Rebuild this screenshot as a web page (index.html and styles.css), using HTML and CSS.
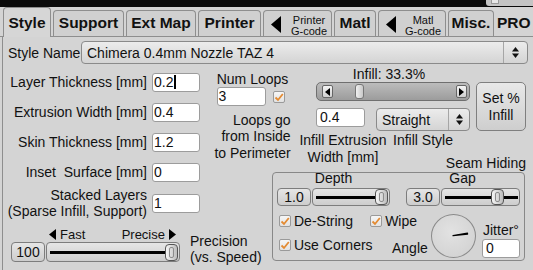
FILE: index.html
```html
<!DOCTYPE html>
<html lang="en">
<head>
  <meta charset="UTF-8" />
  <title>Style Settings</title>
  <link rel="stylesheet" href="styles.css">
</head>
<body>

  <div class="topbar"><div class="mini"><span class="mini-box"></span></div></div>

  <nav class="tabs">
    <div class="tab active w-style">Style</div>
    <div class="tab w-support">Support</div>
    <div class="tab w-ext">Ext Map</div>
    <div class="tab w-printer">Printer</div>
    <div class="tab two w-gcode">
      <svg class="tri" width="10" height="17" viewBox="0 0 10 17"><polygon points="10,0 10,17 0,8.5" fill="#000"/></svg>
      <span class="small">Printer<br>G-code</span>
    </div>
    <div class="tab w-matl">Matl</div>
    <div class="tab two w-gcode2">
      <svg class="tri" width="10" height="17" viewBox="0 0 10 17"><polygon points="10,0 10,17 0,8.5" fill="#000"/></svg>
      <span class="small">Matl<br>G-code</span>
    </div>
    <div class="tab w-misc">Misc.</div>
    <div class="tab pro">PRO</div>
  </nav>

  <main class="panel">
    <div class="name-row">
      <label>Style Name</label>
      <div class="select wide">
        <span class="select-text">Chimera 0.4mm Nozzle TAZ 4</span>
        <span class="spin"><svg width="7" height="11" viewBox="0 0 7 11"><polygon points="0,4.5 3.5,0 7,4.5" fill="#111"/><polygon points="0,6.5 7,6.5 3.5,11" fill="#111"/></svg></span>
      </div>
    </div>

    <div class="body">
      <!-- left column: thickness fields + precision -->
      <div class="col-left">
        <div class="field"><label>Layer Thickness [mm]</label><div class="input">0.2<span class="caret"></span></div></div>
        <div class="field"><label>Extrusion Width [mm]</label><div class="input">0.4</div></div>
        <div class="field"><label>Skin Thickness [mm]</label><div class="input">1.2</div></div>
        <div class="field"><label>Inset&nbsp; Surface [mm]</label><div class="input">0</div></div>
        <div class="field tall"><label>Stacked Layers<br>(Sparse Infill, Support)</label><div class="input">1</div></div>

        <div class="precision">
          <div class="prec-slider">
            <div class="prec-ends">
              <svg class="end-fast" width="7" height="11" viewBox="0 0 7 11"><polygon points="7,0 7,11 0,5.5" fill="#000"/></svg>
              <span class="fast">Fast</span>
              <span class="precise">Precise</span>
              <svg width="7" height="11" viewBox="0 0 7 11"><polygon points="0,0 0,11 7,5.5" fill="#000"/></svg>
            </div>
            <div class="slider-row">
              <div class="valbox big">100</div>
              <div class="track big"><span class="line"></span><span class="thumb"></span></div>
            </div>
          </div>
          <div class="prec-label">Precision<br>(vs. Speed)</div>
        </div>
      </div>

      <!-- right side: loops, infill, seam hiding -->
      <div class="col-right">
        <div class="upper">
          <div class="loops">
            <div>Num Loops</div>
            <div class="loops-row">
              <div class="input loops-input">3</div>
              <span class="cb"><svg width="10" height="10" viewBox="0 0 10 10"><path d="M1.5 5.5 L4 8 L8.8 2" fill="none" stroke="#e38b33" stroke-width="1.8"/></svg></span>
            </div>
            <div class="loops-note">Loops go<br>from Inside<br>to Perimeter</div>
          </div>

          <div class="infill">
            <div class="infill-main">
              <div class="infill-title">Infill: 33.3%</div>
              <div class="scroll">
                <span class="sbtn"><svg width="5" height="8" viewBox="0 0 5 8"><polygon points="5,0 5,8 0,4" fill="#000"/></svg></span>
                <span class="sthumb"></span>
                <span class="sbtn right"><svg width="5" height="8" viewBox="0 0 5 8"><polygon points="0,0 0,8 5,4" fill="#000"/></svg></span>
              </div>
              <div class="infill-controls">
                <div class="input infill-input">0.4</div>
                <div class="select style-select">
                  <span class="select-text">Straight</span>
                  <span class="spin"><svg width="7" height="11" viewBox="0 0 7 11"><polygon points="0,4.5 3.5,0 7,4.5" fill="#111"/><polygon points="0,6.5 7,6.5 3.5,11" fill="#111"/></svg></span>
                </div>
              </div>
              <div class="infill-labels">
                <div class="under w-input"><div>Infill Extrusion<br>Width [mm]</div></div>
                <div class="under w-select"><div>Infill Style</div></div>
              </div>
            </div>
            <button class="btn set-infill">Set %<br>Infill</button>
          </div>
        </div>

        <div class="seam">
          <div class="seam-title">Seam Hiding</div>
          <div class="seam-box">
            <div class="seam-heads"><span>Depth</span><span>Gap</span></div>
            <div class="seam-sliders">
              <div class="pair">
                <div class="valbox">1.0</div>
                <div class="track"><span class="line"></span><span class="thumb"></span></div>
              </div>
              <div class="pair">
                <div class="valbox">3.0</div>
                <div class="track"><span class="line gap-left"></span><span class="thumb"></span><span class="line"></span></div>
              </div>
            </div>
            <div class="seam-opts">
              <div class="opt-row1">
                <span class="check"><span class="cb"><svg width="10" height="10" viewBox="0 0 10 10"><path d="M1.5 5.5 L4 8 L8.8 2" fill="none" stroke="#e38b33" stroke-width="1.8"/></svg></span>De-String</span>
                <span class="check wipe"><span class="cb"><svg width="10" height="10" viewBox="0 0 10 10"><path d="M1.5 5.5 L4 8 L8.8 2" fill="none" stroke="#e38b33" stroke-width="1.8"/></svg></span>Wipe</span>
              </div>
              <div class="opt-row2">
                <span class="check"><span class="cb"><svg width="10" height="10" viewBox="0 0 10 10"><path d="M1.5 5.5 L4 8 L8.8 2" fill="none" stroke="#e38b33" stroke-width="1.8"/></svg></span>Use Corners</span>
              </div>
              <div class="angle">Angle</div>
              <div class="dial">
                <svg width="43" height="42" viewBox="0 0 43 42"><path d="M21 20.6 L35.5 18.2 L35.6 19.1 Z" fill="#000" stroke="#000" stroke-width="1.2" stroke-linejoin="round"/></svg>
              </div>
              <div class="jitter">
                <div>Jitter&deg;</div>
                <div class="input jitter-input">0</div>
              </div>
            </div>
          </div>
        </div>
      </div>
    </div>
  </main>

</body>
</html>
```

FILE: styles.css
```css
* {
  box-sizing: border-box;
}

body {
  margin: 0;
  width: 533px;
  height: 270px;
  overflow: hidden;
  background: #d4d4d4;
  font-family: "Liberation Sans", Arial, sans-serif;
  font-size: 14px;
  line-height: 16px;
  color: #111;
}

/* top strip */
.topbar {
  height: 7px;
  background: #0b0b0b;
  display: flex;
  justify-content: flex-end;
}

.mini {
  width: 47px;
  height: 6px;
  background: #c4c4c4;
  border-radius: 0 0 0 3px;
  padding: 0 0 0 5px;
}

.mini-box {
  display: block;
  width: 8px;
  height: 4px;
  background: #e6e6e6;
  border: 1px solid #999;
  border-top: none;
}

/* tabs */
.tabs {
  display: flex;
  align-items: flex-end;
  height: 30px;
  padding-left: 3px;
  border-bottom: 1px solid #8e8e8e;
}

.tab {
  height: 26px;
  margin-right: 2px;
  border: 1px solid #8e8e8e;
  border-bottom: none;
  border-radius: 4px 4px 0 0;
  background: #d0d0d0;
  font-weight: bold;
  font-size: 15.5px;
  line-height: 18px;
  display: flex;
  align-items: flex-end;
  justify-content: center;
  padding-bottom: 4px;
  white-space: nowrap;
}

.tab.active {
  height: 30px;
  margin-bottom: -1px;
  background: #d6d6d6;
  padding-bottom: 5px;
}

.w-style { width: 48px; }
.w-support { width: 71px; }
.w-ext { width: 70px; }
.w-printer { width: 63px; }
.w-gcode { width: 69px; }
.w-matl { width: 42px; }
.w-gcode2 { width: 68px; }
.w-misc { width: 46px; margin-right: 0; }

.tab.two {
  justify-content: flex-start;
  padding: 0 0 0 7px;
}

.tab.two .tri {
  margin-bottom: 3px;
}

.small {
  font-weight: normal;
  font-size: 11px;
  line-height: 10.5px;
  text-align: center;
  margin-left: 10px;
}

.w-gcode2 .small {
  margin-left: 9px;
}

.tab.pro {
  border: none;
  background: transparent;
  justify-content: flex-start;
  padding-left: 3px;
  flex: 1;
  margin-right: 0;
}

/* main panel */
.panel {
  margin-left: 2px;
  border-left: 1px solid #8e8e8e;
  padding-top: 4px;
  height: 233px;
}

.name-row {
  display: flex;
  align-items: center;
  height: 23px;
  padding-left: 5px;
}

.name-row label {
  width: 73px;
}

.select {
  display: flex;
  align-items: center;
  height: 23px;
  border: 1px solid #8a8a8a;
  border-radius: 4px;
  background: linear-gradient(#ececec, #d4d4d4);
  padding-left: 5px;
}

.select-text {
  flex: 1;
  white-space: nowrap;
}

.spin {
  width: 24px;
  height: 100%;
  border-left: 1px solid #a6a6a6;
  display: flex;
  align-items: center;
  justify-content: center;
}

.select.wide {
  width: 447px;
}

.input {
  height: 19px;
  border: 1px solid #9c9c9c;
  border-radius: 3px;
  background: #fff;
  padding-left: 1px;
  line-height: 17px;
  display: flex;
  align-items: center;
}

.caret {
  display: inline-block;
  width: 2px;
  height: 14px;
  background: #000;
  margin-left: 1px;
}

.body {
  display: flex;
}

/* left column */
.col-left {
  width: 202px;
  flex-shrink: 0;
  padding-top: 3px;
}

.field {
  display: grid;
  grid-template-columns: 144px 48px;
  column-gap: 5px;
  align-items: center;
  height: 30px;
}

.field label {
  text-align: right;
  white-space: nowrap;
}

.precision {
  display: flex;
  align-items: flex-end;
  margin-top: 10px;
  padding-left: 8px;
}

.prec-slider {
  width: 169px;
  flex-shrink: 0;
}

.prec-ends {
  display: flex;
  align-items: center;
  height: 15px;
  font-size: 13px;
  line-height: 15px;
}

.end-fast {
  margin-left: 38px;
}

.fast {
  margin-left: 4px;
}

.precise {
  margin-left: auto;
  margin-right: 4px;
}

.prec-ends svg:last-child {
  margin-right: 4px;
}

.slider-row {
  display: flex;
  gap: 1px;
}

.valbox {
  width: 34px;
  height: 18px;
  border: 1px solid #7d7d7d;
  border-radius: 4px;
  background: linear-gradient(#e6e6e6, #cdcdcd);
  text-align: center;
  line-height: 16px;
  flex-shrink: 0;
}

.valbox.big {
  height: 20px;
  line-height: 18px;
}

.track {
  width: 78px;
  height: 18px;
  border: 1px solid #7d7d7d;
  border-radius: 4px;
  background: linear-gradient(#e6e6e6, #cdcdcd);
  display: flex;
  align-items: center;
  padding: 0 1px 0 3px;
  flex-shrink: 0;
}

.track.big {
  width: 134px;
  height: 20px;
}

.line {
  flex: 1;
  height: 3px;
  background: #000;
}

.line.gap-left {
  flex: 0 0 46px;
}

.thumb {
  position: relative;
  width: 13px;
  height: 17px;
  border: 1px solid #555;
  border-radius: 4px;
  background: linear-gradient(to right, #f6f6f6, #bcbcbc);
  flex-shrink: 0;
}

.thumb::after {
  content: "";
  position: absolute;
  inset: 2px 3px;
  border: 1px solid #8c8c8c;
  border-radius: 2px;
}

.track .thumb {
  height: 16px;
}

.track.big .thumb {
  height: 17px;
}

.prec-label {
  margin-left: 10px;
  margin-bottom: -3px;
  white-space: nowrap;
}

/* right side */
.col-right {
  width: 328px;
  flex-shrink: 0;
}

.upper {
  display: flex;
  height: 91px;
}

.loops {
  width: 95px;
  flex-shrink: 0;
  padding-top: 7px;
  text-align: center;
  display: flex;
  flex-direction: column;
  align-items: center;
}

.loops-row {
  display: flex;
  align-items: center;
  gap: 7px;
  margin-left: -4px;
}

.loops-input {
  width: 49px;
  text-align: left;
}

.cb {
  width: 12px;
  height: 12px;
  border: 1px solid #9a9a9a;
  border-radius: 2px;
  background: linear-gradient(#f6f6f6, #e2e2e2);
  display: flex;
  align-items: center;
  justify-content: center;
  flex-shrink: 0;
}

.loops-note {
  margin-top: 6px;
  text-align: right;
  line-height: 16.3px;
  white-space: nowrap;
}

.infill {
  display: flex;
  padding-left: 16px;
}

.infill-main {
  width: 154px;
  flex-shrink: 0;
  padding-top: 2px;
}

.infill-title {
  text-align: center;
  padding-right: 8px;
}

.scroll {
  height: 19px;
  border: 1px solid #6f6f6f;
  border-radius: 5px;
  background: linear-gradient(#bcbcbc, #9c9c9c);
  display: flex;
  align-items: center;
  padding: 0 2px 0 5px;
}

.sbtn {
  width: 11px;
  height: 13px;
  border: 1px solid #666;
  border-radius: 2px;
  background: linear-gradient(#f4f4f4, #d0d0d0);
  display: flex;
  align-items: center;
  justify-content: center;
}

.sbtn.right {
  margin-left: auto;
}

.sthumb {
  width: 9px;
  height: 15px;
  margin-left: 22px;
  border: 1px solid #777;
  border-radius: 3px;
  background: linear-gradient(to right, #f0f0f0, #c8c8c8);
}

.infill-controls {
  display: flex;
  align-items: flex-start;
  margin-top: 7px;
}

.infill-input {
  width: 49px;
  padding-left: 3px;
  flex-shrink: 0;
}

.style-select {
  width: 94px;
  margin-left: 11px;
  flex-shrink: 0;
}

.style-select .spin {
  width: 21px;
}

.infill-labels {
  display: flex;
  margin-top: 1px;
  line-height: 16.5px;
}

.under {
  display: flex;
  justify-content: center;
  text-align: center;
  white-space: nowrap;
  flex-shrink: 0;
}

.under.w-input {
  width: 49px;
  padding-left: 5px;
}

.under.w-select {
  width: 94px;
  margin-left: 11px;
}

.btn {
  width: 50px;
  height: 49px;
  margin: 18px 0 0 6px;
  border: 1px solid #7f7f7f;
  border-radius: 5px;
  background: linear-gradient(#e8e8e8, #cecece);
  font: inherit;
  line-height: 16.3px;
  color: inherit;
  padding: 0;
  flex-shrink: 0;
}

/* seam hiding group */
.seam-title {
  text-align: right;
  padding-right: 7px;
  line-height: 17px;
}

.seam-box {
  margin-left: 67px;
  width: 253px;
  height: 89px;
  border: 1px solid #888;
  border-radius: 4px;
  padding: 0 0 0 4px;
}

.seam-heads {
  display: flex;
  gap: 16px;
  margin-top: -2px;
  line-height: 15px;
}

.seam-heads span {
  width: 113px;
  text-align: center;
}

.seam-sliders {
  display: flex;
  gap: 16px;
  margin-top: 2px;
}

.pair {
  display: flex;
  gap: 1px;
}

.pair:last-child .track {
  width: 79px;
}

.seam-opts {
  display: grid;
  grid-template-columns: 113px 39px 45px 44px;
  grid-template-rows: 22px 26px;
  margin-top: 4px;
  padding-left: 2px;
}

.opt-row1 {
  grid-column: 1 / 3;
  grid-row: 1;
  display: flex;
  align-items: center;
}

.opt-row2 {
  grid-column: 1;
  grid-row: 2;
  display: flex;
  align-items: center;
}

.check {
  display: flex;
  align-items: center;
  gap: 3px;
  white-space: nowrap;
}

.check.wipe {
  margin-left: 17px;
}

.angle {
  grid-column: 2;
  grid-row: 2;
  align-self: end;
  margin-bottom: 2px;
}

.dial {
  grid-column: 3;
  grid-row: 1 / 3;
  align-self: end;
  width: 45px;
  height: 44px;
  border: 1px solid #8a8a8a;
  border-radius: 50%;
  background: radial-gradient(circle at 45% 40%, #e2e2e2, #cfcfcf);
}

.dial svg {
  display: block;
}

.jitter {
  grid-column: 4;
  grid-row: 1 / 3;
  display: flex;
  flex-direction: column;
  justify-content: flex-end;
  margin-left: 6px;
}

.jitter div:first-child {
  margin-bottom: 1px;
  padding-left: 1px;
  white-space: nowrap;
}

.jitter-input {
  width: 38px;
  padding-left: 3px;
}
```
